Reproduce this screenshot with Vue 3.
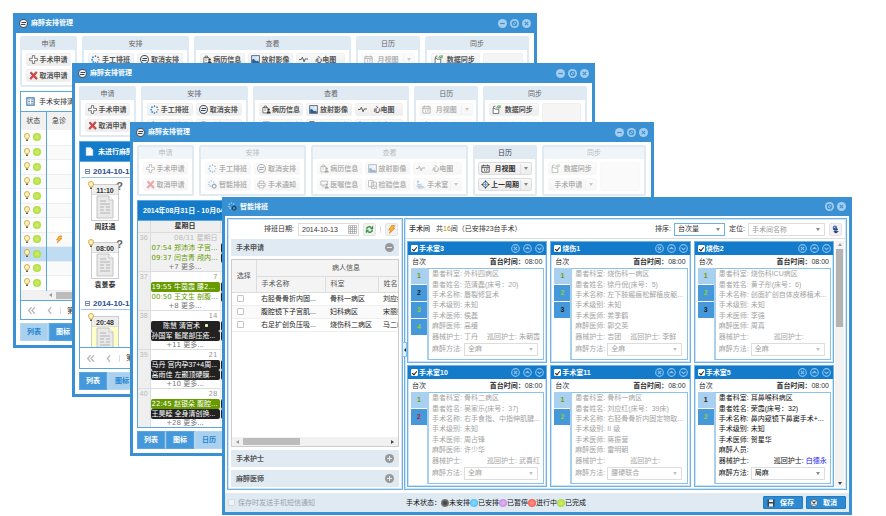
<script setup>
import { ref } from 'vue'

const groups = [
  { title: '申请', kind: 'apply', buttons: [
    { icon: 'plus', label: '手术申请' }, { icon: 'cross', label: '取消申请' }] },
  { title: '安排', kind: 'plan', buttons: [
    { icon: 'dots', label: '手工排班' }, { icon: 'link', label: '取消安排' },
    { icon: 'smart', label: '智能排班' }, { icon: 'print', label: '手术通知' }] },
  { title: '查看', kind: 'view', buttons: [
    { icon: 'case', label: '病历信息' }, { icon: 'image', label: '放射影像' }, { icon: 'ecg', label: '心电图' },
    { icon: 'order', label: '医嘱信息' }, { icon: 'report', label: '检验信息' }, { icon: 'room', label: '手术室', menu: true }] },
  { title: '日历', kind: 'calendar', buttons: [
    { icon: 'calendar', label: '月视图', menu: true }, { icon: 'target', label: '上一周期', menu: true }] },
  { title: '同步', kind: 'sync', buttons: [
    { icon: 'sync', label: '数据同步' }, { label: '手术申请', menu: true, faded: true }] }
]

const managers = [
  { kind: 'list', active: '列表' },
  { kind: 'icons', active: '图标' },
  { kind: 'month', active: '日历' }
]
const tabs = ['列表', '图标', '日历']

const cases = [0, 0, 0, 0, 0, 0, 0, 1, 0, 0, 0]

const days = [
  { date: '2014-10-15', items: [
    { time: '11:10', name: '周跃通', query: true }, { time: '08:00', name: '袁景泰', query: true }] },
  { date: '2014-10-13', items: [{ time: '20:48', name: '', marked: true }] }
]

const weeks = [
  { no: 36, date: '08/31 星期日', out: true, more: '+7 更多...', events: [
    { tone: 'plain', text: '07:54 郑沛沛 子宫...' }, { tone: 'plain', text: '09:37 闫吉青 颅内...' }] },
  { no: 37, date: '7', more: '+8 更多...', events: [
    { tone: 'green', text: '19:55 牛茵霞 腰2...' }, { tone: 'plain', text: '00:50 王文生 剖腹...' }] },
  { no: 38, date: '14', more: '+11 更多...', events: [
    { tone: 'black', text: '陈慧 清宫术', dot: true }, { tone: 'black', text: '孙国军 骶尾部压疮...' }] },
  { no: 39, date: '21', more: '+10 更多...', events: [
    { tone: 'black', text: '马丹 宫内孕37+4周...' }, { tone: 'black', text: '高雨佳 左颞顶硬膜...' }] },
  { no: 40, date: '28', more: '+28 更多...', events: [
    { tone: 'green', text: '22:45 赵银朵 腹腔...' }, { tone: 'black', text: '王昊睦 全身清创换...' }] }
]

const requests = [
  { op: '右胫骨骨折内固...', dept: '骨科一病区', name: '刘应红' },
  { op: '腹腔镜下子宫肌...', dept: '妇科病区', name: '宋丽娟' },
  { op: '右足扩创负压吸...', dept: '烧伤科二病区', name: '马二峰' }
]

const rooms = ref([
  { room: '手术室3', slots: ['done', 'todo', 'next', 'next'], dept: '外科四病区', patient: '范清磊(床号：20)', op: '唇裂修复术', level: '未知', surgeon: '侯磊', anes: '高缓', tool: '丁丹', round: '朱朝霞', method: '全麻' },
  { room: '烧伤1', slots: ['done', 'next', 'todo'], dept: '烧伤科一病区', patient: '徐丹倪(床号：5)', op: '左下肢瘢痕松解植皮躯...', level: '未知', surgeon: '娄季鹤', anes: '郭交英', tool: '吉团', round: '李鲜', method: '全麻' },
  { room: '烧伤2', slots: ['done', 'next', 'todo'], dept: '烧伤科ICU病区', patient: '黄子彤(床号：6)', op: '创面扩创自体皮移植术...', level: '未知', surgeon: '李强', anes: '周真', tool: '', round: '', method: '全麻' },
  { room: '手术室10', slots: ['done', 'alert'], dept: '骨科二病区', patient: '吴家乐(床号：37)', op: '右手食指、中指伸肌腱...', level: '未知', surgeon: '周占锋', anes: '许少华', tool: '', round: '武喜红', method: '全麻' },
  { room: '手术室11', slots: ['done', 'next'], dept: '骨科一病区', patient: '刘应红(床号：39床)', op: '右胫骨骨折内固定物取...', level: 'II 级', surgeon: '蒋振营', anes: '雷明朝', tool: '', round: '', method: '腰硬联合' },
  { room: '手术室5', slots: ['todo', 'next'], dept: '耳鼻喉科病区', patient: '荣霞(床号：32)', op: '鼻内窥镜下鼻窦手术+...', level: '未知', surgeon: '贺星华', anes: '', tool: '', round: '白德永', method: '局麻', open: true }
])

const fields = [
  ['患者科室:', 'dept'], ['患者姓名:', 'patient'], ['手术名称:', 'op'],
  ['手术级别:', 'level'], ['手术医师:', 'surgeon'], ['麻醉医师:', 'anes']
]

const states = [
  { label: '未安排', tone: 'gray' }, { label: '已安排', tone: 'blue' }, { label: '已暂停', tone: 'purple' },
  { label: '进行中', tone: 'red' }, { label: '已完成', tone: 'lime' }
]
</script>

<template>
  <main class="desktop">
    <svg class="sprite" aria-hidden="true">
      <symbol id="link" viewBox="0 0 16 16"><circle cx="8" cy="8" r="7" fill="#eef3f7" stroke="#4a5058" stroke-width="1.8" /><path d="M4.500 6.300h8M3.500 9.800h8" stroke="#3c444c" stroke-width="1.800" fill="none" /></symbol>
      <symbol id="cancel" viewBox="0 0 16 16"><circle cx="8" cy="8" r="7" fill="#eef3f7" stroke="#4a5058" stroke-width="1.5" /><path d="M5 5l6 6M11 5l-6 6" stroke="#3c444c" stroke-width="2.200" /></symbol>
      <symbol id="plus" viewBox="0 0 16 16"><path d="M6 1h4v5h5v4h-5v5H6v-5H1V6h5z" fill="#fff" stroke="#666" stroke-width="1.5" /></symbol>
      <symbol id="cross" viewBox="0 0 16 16"><path d="M2 3.5 4 1.5 8 5.7 12.500 1 14.500 3 10.300 7.800 15 13 12.500 15 8 10.300 3.500 15 1.500 13 5.800 8z" fill="#dd4448" stroke="#a83136" /></symbol>
      <symbol id="dots" viewBox="0 0 16 16"><g fill="#5d6670"><circle cx="8" cy="2" r="1.4" /><circle cx="12.500" cy="4" r="1.5" /><circle cx="14" cy="8.300" r="1.200" /><circle cx="12" cy="12.500" r="1.300" /></g><g fill="#3f96dd"><circle cx="3.500" cy="4" r="1.700" /><circle cx="2" cy="8.500" r="1.700" /><circle cx="4" cy="12.500" r="1.800" /><circle cx="8" cy="14.200" r="1.600" /></g></symbol>
      <symbol id="smart" viewBox="0 0 16 16"><g class="spark"><circle cx="6" cy="1.800" r="1.500" /><circle cx="2.300" cy="4" r="1.500" /><circle cx="1.800" cy="8" r="1.500" /><circle cx="4" cy="11" r="1.500" /><circle cx="10" cy="3.500" r="1.500" /></g><circle cx="11" cy="11" r="3.300" fill="none" stroke="#2a4560" stroke-width="2" /><path d="M11 6v2M11 14v2M6 11h2M14 11h2" stroke="#2a4560" stroke-width="1.500" /></symbol>
      <symbol id="print" viewBox="0 0 16 16"><path d="M4 6V2h8v4M4 11H1.500V6h13v5H12M4 9.500h8V14H4z" fill="#fff" stroke="#555" stroke-width="1.500" /></symbol>
      <symbol id="case" viewBox="0 0 16 16"><path d="M1.500 4.500h9V14h-9zM4 4.500V2h4v2.500" fill="#fff" stroke="#555" stroke-width="1.400" /><path d="M4 7h4M4 9.500h3" stroke="#555" /><circle cx="12" cy="8" r="2" fill="#333" /><path d="M8.500 15c0-5 7-5 7 0z" fill="#333" /></symbol>
      <symbol id="image" viewBox="0 0 16 16"><path d="M1 1h14v14H1z" fill="#cfe5f6" stroke="#56606a" stroke-width="1.500" /><path d="M2 14V8l3-1 4 4 3-1 2 2v2z" fill="#2d5f8f" /><circle cx="11.500" cy="4.500" r="1.500" fill="#fff" /></symbol>
      <symbol id="ecg" viewBox="0 0 16 16"><path d="M0 8h4l2-4 3 8 2-5h5" fill="none" stroke="#444" stroke-width="1.500" /></symbol>
      <symbol id="order" viewBox="0 0 16 16"><path d="M10 9H1.500V2h12v4M4 12h4" fill="none" stroke="#555" stroke-width="1.500" /><circle cx="12" cy="8" r="2" fill="#333" /><path d="M8.500 15c0-5 7-5 7 0z" fill="#333" /></symbol>
      <symbol id="report" viewBox="0 0 16 16"><path d="M1 1h8v11H1zM6 4h9v11H6z" fill="#fff" stroke="#555" stroke-width="1.400" /><path d="M8 7h4M8 10h3" stroke="#555" /><circle cx="11.500" cy="11" r="2" fill="none" stroke="#333" /></symbol>
      <symbol id="room" viewBox="0 0 16 16"><circle cx="3.500" cy="3" r="2" fill="#3f96dd" /><path d="M2 7l5 2 3-2M1 11h10l4 3M3 14h9" fill="none" stroke="#356a9c" stroke-width="1.700" /></symbol>
      <symbol id="calendar" viewBox="0 0 16 16"><path d="M1.500 3h13v11.500h-13zM1.500 6h13" fill="#fff" stroke="#444" stroke-width="1.500" /><path d="M4.500 1v3M11.500 1v3M5 8.500h1.500V13M9 8.500h2.500L9.500 13" fill="none" stroke="#444" stroke-width="1.300" /></symbol>
      <symbol id="target" viewBox="0 0 16 16"><circle cx="8" cy="8" r="4.600" fill="#d3e8f8" stroke="#555" stroke-width="1.400" /><path d="M8 0l2 3.500H6zM8 16l2-3.500H6zM0 8l3.500-2v4zM16 8l-3.500-2v4z" fill="#444" /><path d="M8 5v6M5 8h6" stroke="#4b98dc" stroke-width="1.400" /></symbol>
      <symbol id="sync" viewBox="0 0 16 16"><path d="M2 6h3l1 1.500h6V15H2zM2 6l1.500-4H6" fill="#fff" stroke="#555" stroke-width="1.400" /><path d="M8.500 5c0-3 3-4 5-3l1-1v4h-4l1-1.500" fill="none" stroke="#3a8a3e" stroke-width="1.500" /></symbol>
      <symbol id="minus" viewBox="0 0 16 16"><circle cx="8" cy="8" r="8" class="disc" /><path d="M4 8h8" class="mark" /></symbol>
      <symbol id="resize" viewBox="0 0 16 16"><circle cx="8" cy="8" r="8" class="disc" /><circle cx="8" cy="8" r="4" class="mark" /><path d="M5 5l6 6" class="mark" /></symbol>
      <symbol id="close" viewBox="0 0 16 16"><circle cx="8" cy="8" r="8" class="disc" /><path d="M5 5l6 6M11 5l-6 6" class="mark" /></symbol>
      <symbol id="ring-x" viewBox="0 0 16 16"><circle cx="8" cy="8" r="6.800" class="ring" /><path d="M5 5l6 6M11 5l-6 6" class="stroke" /></symbol>
      <symbol id="ring-up" viewBox="0 0 16 16"><circle cx="8" cy="8" r="6.800" class="ring" /><path d="M4.500 9.500 8 6l3.500 3.500" class="stroke" /></symbol>
      <symbol id="ring-down" viewBox="0 0 16 16"><circle cx="8" cy="8" r="6.800" class="ring" /><path d="M4.500 6.500 8 10l3.500-3.500" class="stroke" /></symbol>
      <symbol id="bulb" viewBox="0 0 16 16"><path d="M5.500 11C5.500 9 3 8 3 5a5 5 0 0 1 10 0c0 3-2.500 4-2.500 6z" fill="#fff3b8" stroke="#c99a2e" stroke-width="1.600" /><path d="M6 12h4v3H6z" fill="#6b6048" /></symbol>
      <symbol id="bolt" viewBox="0 0 16 16"><path d="M8 1h6l-3 5h3L4 15l3-6H3z" fill="#fbb62a" stroke="#d06f1a" /></symbol>
      <symbol id="sheet" viewBox="0 0 16 16"><path d="M2 1h8l4 4v10H2z" fill="#fff" stroke="#cfdbe6" /><path d="M10 1v4h4" fill="#cbd6df" /></symbol>
      <symbol id="grid" viewBox="0 0 16 16"><path d="M1.500 1.500h13v13h-13z" fill="#fff" stroke="#4478aa" stroke-width="2" /><path d="M4 5h3M9 5h4M4 8h3M9 8h4M4 11h3M9 11h4" stroke="#4478aa" stroke-width="1.400" /></symbol>
      <symbol id="doc" viewBox="0 0 18 24"><path d="M1 1h12l4 4v18H1z" fill="#e9e9e9" stroke="#c4c4c4" /><path d="M13 1v4h4" fill="#fff" stroke="#c4c4c4" /><path d="M4 6h6M4 9h10M4 12h4M10 12h4M4 15h4M10 15h4M4 18h10" stroke="#b4b4b4" stroke-width="1.200" /></symbol>
      <symbol id="cells" viewBox="0 0 16 16"><path d="M1 1h14v14H1zM1 4.500h14M1 8h14M1 11.500h14M4.500 1v14M8 1v14M11.500 1v14" fill="none" stroke="#8b8b8b" /></symbol>
      <symbol id="reload" viewBox="0 0 16 16"><path d="M3 7.500C3 3 8.500 2 11 4.500M13 8.500c0 4.500-5.500 5.500-8 3" fill="none" stroke="#37913f" stroke-width="2.600" /><path d="M14.500 1v6.500H8.500zM1.500 15V8.500h6z" fill="#37913f" /></symbol>
      <symbol id="locate" viewBox="0 0 16 16"><circle cx="7" cy="5" r="4" fill="#5474b8" /><path d="M7 5l6 2-3 3 4 1-5 4-5-3 3-2-4-3z" fill="#27437f" /><path d="M5 4l3 2M8 9l2 2" stroke="#d6e2f6" stroke-width="1.500" /></symbol>
      <symbol id="save" viewBox="0 0 16 16"><path d="M1 1h14v14H1z" fill="#37434e" /><path d="M4 1h8v5H4zM4 9h8v6H4z" fill="#e8f1f8" /></symbol>
      <symbol id="back" viewBox="0 0 16 16"><path d="M8 2 3 8l5 6M14 2 9 8l5 6" fill="none" stroke="#b9b9b9" stroke-width="2.400" /></symbol>
      <symbol id="prev" viewBox="0 0 16 16"><path d="M11 2 6 8l5 6" fill="none" stroke="#b9b9b9" stroke-width="2.400" /></symbol>
    </svg>

    <section v-for="m in managers" :key="m.kind" class="window" :class="'at-' + m.kind">
      <header class="titlebar">
        <svg class="ico"><use href="#link" /></svg>
        <h2>麻醉安排管理</h2>
        <button v-for="c in ['minus', 'resize', 'close']" :key="c" class="bare" :aria-label="c"><svg class="ico"><use :href="'#' + c" /></svg></button>
      </header>
      <div class="ribbon">
        <div v-for="g in groups" :key="g.kind" class="group" :class="[g.kind, { dim: m.kind === 'month' && g.kind !== 'calendar', off: m.kind !== 'month' && g.kind === 'calendar' }]">
          <h3>{{ g.title }}</h3>
          <div class="tools">
            <button v-for="b in g.buttons" :key="b.label" class="tool" :class="{ faded: b.faded }">
              <svg v-if="b.icon" class="ico"><use :href="'#' + b.icon" /></svg>
              <span>{{ b.label }}</span>
              <i v-if="b.menu" class="caret"></i>
            </button>
            <div v-if="g.kind === 'sync'" class="blank"></div>
          </div>
        </div>
      </div>

      <div class="pane">
        <template v-if="m.kind === 'list'">
          <div class="caption"><svg class="ico"><use href="#grid" /></svg>手术安排清单</div>
          <table class="cases">
            <thead><tr><th class="state">状态</th><th class="urgent">急诊</th><th></th></tr></thead>
            <tbody>
              <tr v-for="(u, i) in cases" :key="i" :class="{ picked: i === 8 }">
                <td class="state"><div class="lights"><svg class="lamp"><use href="#bulb" /></svg><i class="ball lime"></i></div></td>
                <td class="urgent"><svg v-if="u" class="lamp"><use href="#bolt" /></svg></td><td></td>
              </tr>
            </tbody>
          </table>
          <div class="hscroll inset"><i class="left"></i><b></b></div>
        </template>

        <template v-else-if="m.kind === 'icons'">
          <div class="caption solid"><svg class="ico"><use href="#sheet" /></svg>未进行麻醉</div>
          <div class="thumbs">
            <template v-for="d in days" :key="d.date">
              <h4><i class="fold"></i>{{ d.date }}</h4>
              <figure v-for="t in d.items" :key="t.time" :class="{ marked: t.marked }">
                <div class="thumb"><b>{{ t.time }}</b><svg class="doc"><use href="#doc" /></svg></div>
                <svg class="lamp tip"><use href="#bulb" /></svg>
                <span v-if="t.query" class="query">?</span>
                <figcaption>{{ t.name }}</figcaption>
              </figure>
            </template>
          </div>
        </template>

        <template v-else>
          <div class="caption solid range">2014年08月31日 - 10月04日</div>
          <table class="month">
            <thead><tr><th class="no"></th><th class="day">星期日</th><th></th></tr></thead>
            <tbody>
              <tr v-for="w in weeks" :key="w.no">
                <th class="no">{{ w.no }}</th>
                <td class="day" :class="{ out: w.out }">
                  <p class="when">{{ w.date }}</p>
                  <p v-for="e in w.events" :key="e.text" class="event" :class="[e.tone, { dotted: e.dot }]">{{ e.text }}</p>
                  <p class="more">{{ w.more }}</p>
                </td>
                <td :class="{ out: w.out }"><p class="when"></p><p class="event black"></p><p class="event black"></p></td>
              </tr>
            </tbody>
          </table>
        </template>

        <div v-if="m.kind !== 'month'" class="pager"><svg class="ico"><use href="#back" /></svg><svg class="ico prev"><use href="#prev" /></svg><i></i>第</div>
      </div>
      <nav class="views"><button v-for="t in tabs" :key="t" :class="{ on: t === m.active }">{{ t }}</button></nav>
    </section>

    <section class="window at-smart">
      <header class="titlebar">
        <svg class="ico"><use href="#smart" /></svg>
        <h2>智能排班</h2>
        <button v-for="c in ['resize', 'close']" :key="c" class="bare" :aria-label="c"><svg class="ico"><use :href="'#' + c" /></svg></button>
      </header>
      <div class="split">
        <aside class="frame side">
          <div class="filter">
            <label for="date">排班日期:</label>
            <div class="box date"><input id="date" value="2014-10-13"><svg class="ico"><use href="#cells" /></svg></div>
            <button class="mini" aria-label="刷新"><svg class="ico"><use href="#reload" /></svg></button>
            <i class="rule"></i>
            <button class="mini" aria-label="排班"><svg class="ico"><use href="#bolt" /></svg></button>
          </div>
          <button class="fold-head">手术申请<i class="knob"></i></button>
          <div class="sheet">
            <div class="grid">
              <table>
                <colgroup><col class="c1"><col class="c2"><col class="c3"><col class="c4"></colgroup>
                <thead>
                  <tr><th rowspan="2">选择</th><th colspan="3">病人信息</th></tr>
                  <tr><th class="sub">手术名称</th><th class="sub">科室</th><th class="sub">姓名</th></tr>
                </thead>
                <tbody>
                  <tr v-for="r in requests" :key="r.name"><td class="pick"><input type="checkbox" class="tick" :aria-label="r.name"></td><td>{{ r.op }}</td><td>{{ r.dept }}</td><td>{{ r.name }}</td></tr>
                </tbody>
              </table>
            </div>
            <div class="hscroll"><i class="left"></i><b></b><i class="right"></i></div>
          </div>
          <button class="fold-head">手术护士<i class="knob add"></i></button>
          <button class="fold-head">麻醉医师<i class="knob add"></i></button>
        </aside>
        <button class="grip" aria-label="收起"></button>

        <div class="frame">
          <div class="bar">
            <b>手术间</b><span class="count">共<em>16</em>间（已安排23台手术）</span>
            <label for="sort">排序:</label>
            <div class="box sort"><select id="sort"><option>台次量</option></select><i class="caret"></i></div>
            <label for="find">定位:</label>
            <div class="box find"><input id="find" placeholder="手术间名称"><i class="caret"></i></div>
            <button class="mini" aria-label="定位"><svg class="ico"><use href="#locate" /></svg></button>
          </div>
          <div class="scroller">
            <div class="cards">
              <article v-for="(r, n) in rooms" :key="r.room" class="card" :class="{ open: r.open }">
                <header>
                  <label><input type="checkbox" class="tick" checked>{{ r.room }}</label>
                  <button v-for="c in ['x', 'up', 'down']" :key="c" class="bare" :aria-label="c"><svg class="ico"><use :href="'#ring-' + c" /></svg></button>
                </header>
                <div class="first"><span>台次</span><span><b>首台时间：</b>08:00</span></div>
                <div class="detail">
                  <div class="slots"><button v-for="(s, i) in r.slots" :key="i" :class="s">{{ i + 1 }}</button></div>
                  <div class="info">
                    <p v-for="f in fields" :key="f[1]"><span>{{ r.open && f[1] === 'anes' ? '麻醉人员:' : f[0] }}</span><span>{{ r[f[1]] }}</span></p>
                    <p class="nurses"><span>器械护士:</span><span>{{ r.tool }}</span><span>巡回护士:</span><span class="round">{{ r.round }}</span></p>
                    <div class="method"><label :for="'m' + n">麻醉方法:</label><div class="box"><select :id="'m' + n"><option>{{ r.method }}</option></select><i class="caret"></i></div></div>
                  </div>
                </div>
              </article>
            </div>
            <div class="vscroll"><i class="up"></i><b></b><i class="down"></i></div>
          </div>
        </div>
      </div>
      <footer>
        <label class="notify"><input type="checkbox" class="tick" disabled>保存时发送手机短信通知</label>
        <div class="legend">手术状态：<template v-for="s in states" :key="s.label"><i class="ball" :class="s.tone"></i>{{ s.label }}</template></div>
        <button class="act"><svg class="ico"><use href="#save" /></svg><span>保存</span></button>
        <button class="act"><svg class="ico"><use href="#cancel" /></svg><span>取消</span></button>
      </footer>
    </section>
  </main>
</template>

<style>
html, body { background: #fff; }
.disc { fill: #a5cdee; }
.mark { fill: none; stroke: #3991d4; stroke-width: 2; }
.ring, .stroke { fill: none; stroke: #8cc3ee; stroke-width: 2; }
.spark { fill: var(--spark, #4b98dc); }
</style>

<style scoped>
* { box-sizing: border-box; margin: 0; }
.desktop { position: relative; min-height: 100vh; overflow: hidden; font: 7px/10px "Liberation Sans", "Noto Sans CJK SC", sans-serif; color: #333; }
button, input, select { font: inherit; color: inherit; border: 0; padding: 0; background: none; border-radius: 0; min-width: 0; }
h2, h3, h4 { font-size: inherit; }
table { border-collapse: collapse; table-layout: fixed; width: 100%; }
th, td { padding: 0; font-weight: 400; white-space: nowrap; overflow: hidden; }
.sprite { position: absolute; width: 0; height: 0; }
.ico { width: 9px; height: 9px; flex: none; display: block; }
.lamp { width: 8px; height: 9px; display: block; flex: none; }
.bare { display: block; }

.window { position: absolute; display: flex; flex-direction: column; background: #fff; border: 3px solid #3991d4; border-top: 0; overflow: hidden; }
.at-list { left: 13px; top: 13px; width: 524px; height: 335px; }
.at-icons { left: 72px; top: 63px; width: 523px; height: 334px; }
.at-month { left: 130px; top: 122px; width: 524px; height: 334px; }
.at-smart { left: 222px; top: 197px; width: 630px; height: 318px; }
.titlebar { display: flex; align-items: center; gap: 3px; height: 20px; flex: none; padding: 0 3px; background: #3991d4; color: #fff; --spark: #8fcbf7; }
.titlebar h2 { flex: 1; font-weight: 700; }
.at-smart .titlebar { height: 19px; }

.ribbon { display: grid; grid-template-columns: 57fr 107fr 157fr 64fr 104fr; gap: 5px; padding: 3px 5px 4px 4px; flex: none; }
.group { border: 2px solid #dfeaf3; border-radius: 2px; background: #fff; min-width: 0; }
.group h3 { height: 12px; line-height: 11px; background: #dfeaf3; text-align: center; font-weight: 400; color: #666; }
.tools { display: grid; gap: 3px; padding: 3px 4px; grid-auto-rows: 13px; }
.plan .tools { grid-template-columns: 1fr 1fr; }
.view .tools { grid-template-columns: 45fr 46fr 49fr; }
.calendar .tools { padding: 3px; }
.sync .tools { grid-template-columns: 50fr 40fr; grid-auto-flow: column; grid-template-rows: 13px 13px; }
.tool { display: flex; align-items: center; padding: 0 1px 0 2px; overflow: hidden; white-space: nowrap; background: linear-gradient(#f8f8f8, #ededed); border: 1px solid #f0f0f0; border-radius: 2px; font-weight: 700; color: #555; }
.tool span { flex: 1; text-align: center; }
.tool .caret { margin: 0 2px 0 3px; }
.tool span:has(+ .caret) { border-right: 1px solid #e2e2e2; }
.blank { grid-row: span 2; background: #f5f5f5; border: 1px solid #f0f0f0; border-radius: 2px; }
.dim h3, .dim .tools, .off .tools, .faded { opacity: .45; }
.dim .faded { opacity: 1; }
.at-month .calendar .tool { color: #333; border-color: #ddd; }
.at-month .calendar h3 { color: #444; }
.caret { width: 0; height: 0; flex: none; border: 2px solid transparent; border-top: 3px solid #888; border-bottom: 0; }

.pane { flex: 1; min-height: 0; display: flex; flex-direction: column; margin: 0 4px 3px; border: 1px solid #5aa7e0; overflow: hidden; }
.caption { display: flex; align-items: center; gap: 4px; height: 20px; flex: none; padding: 0 5px; border-bottom: 1px solid #5aa7e0; }
.solid { background: #137bca; color: #fff; font-weight: 700; }
.range { padding: 0 5px; }
.cases { flex: none; }
.cases th { height: 18px; background: #f1f1f1; border-right: 1px solid #ccc; color: #444; }
.cases .state { width: 25px; border-right: 1px solid #5aa7e0; }
.cases .urgent { width: 26px; }
.cases tbody tr { height: 15px; border-bottom: 1px solid #eee; }
.cases tbody tr:nth-child(even) { height: 14px; background: #fafafa; }
.cases tbody tr.picked { background: #bfdcf2; }
.cases .urgent svg { margin: 0 auto; }
.lights { display: flex; align-items: center; gap: 2px; padding-left: 2px; }
.ball { display: inline-block; width: 8px; height: 8px; border-radius: 50%; flex: none; }
.lime { background: radial-gradient(#c9ec62 20%, #9fd02a); }
.gray { background: radial-gradient(#444 20%, #aaa); }
.blue { background: radial-gradient(#7fd6f7 20%, #3fb6ea); }
.purple { background: radial-gradient(#deb0ee 20%, #bb7bdb); }
.red { background: radial-gradient(#ff8b80 20%, #f04440); }
.hscroll { display: flex; align-items: center; height: 9px; flex: none; padding: 0 4px; gap: 4px; background: #f1f1f1; }
.hscroll b { width: 57px; height: 7px; background: #bcbcbc; }
.inset { padding-left: 28px; }
.hscroll i { flex: none; border: 2px solid transparent; }
.hscroll .left { border-left: 0; border-right: 3px solid #999; }
.hscroll .right { border-right: 0; border-left: 3px solid #444; margin-left: auto; }
.pager { display: flex; align-items: center; gap: 6px; height: 21px; flex: none; margin-top: auto; padding: 0 6px; border-top: 1px solid #5aa7e0; background: #fff; }
.pager i { width: 1px; height: 7px; background: #ddd; }
.prev { margin-left: 3px; }
.views { display: flex; gap: 1px; height: 18px; flex: none; margin: 0 4px 4px; background: #a9d0ef; }
.views button { width: 28px; background: #4598d9; color: #fff; font-weight: 700; border: 1px solid #5ba6e0; }
.views .on, .at-list .views button:first-child { background: #a9d0ef; color: #2385d0; border-color: #b4d7f2; }
.at-list .views .on { background: #4598d9; color: #fff; border-color: #5ba6e0; }

.thumbs { flex: 1; min-height: 0; overflow: hidden; padding-left: 1px; }
.thumbs h4 { display: flex; align-items: center; gap: 3px; height: 16px; padding: 4px 4px 0; border-bottom: 1px solid #9fc3ea; color: #2d4f8e; font-size: 8px; }
.fold { width: 5px; height: 5px; border: 1px solid #7d93b5; background: linear-gradient(#fff 1px, #667fa8 1px, #667fa8 2px, #fff 2px); }
figure { position: relative; width: 48px; height: 58px; padding: 6px 10px 0; }
.thumb { display: flex; flex-direction: column; align-items: center; height: 37px; border: 1px solid #ccc; background: #fff; }
.thumb b { align-self: stretch; height: 10px; line-height: 11px; text-align: center; font-size: 7px; background: #eee; border-bottom: 1px solid #ddd; }
.marked .thumb { background: #ffffc8; }
.doc { width: 20px; height: 24px; }
figcaption { text-align: center; margin-top: 1px; font-weight: 700; font-size: 7px; }
.tip { position: absolute; left: 6px; top: 3px; }
.query { position: absolute; right: 6px; top: 3px; font-size: 11px; font-weight: 700; color: #666; }

.month { font-family: "DejaVu Sans", "Noto Sans CJK SC", sans-serif; }
.month th { background: #efefef; border-right: 1px solid #ddd; }
.month thead th { height: 11px; font-weight: 700; border-bottom: 1px solid #ddd; }
.month .no { width: 12px; vertical-align: top; color: #bbb; font-family: "Liberation Sans", sans-serif; }
.month .day { width: 70px; }
.month tbody tr { height: 39px; border-bottom: 1px solid #ddd; }
.month td { vertical-align: top; padding: 0; border-right: 1px solid #eee; }
.month .out { background: #f1f1f1; }
.month p { overflow: hidden; }
.when { height: 10px; text-align: right; padding-right: 2px; color: #999; }
.out .when { color: #bbb; }
.event { height: 10px; line-height: 10px; border-radius: 2px; padding-left: 1px; color: #fff; }
.event.plain { color: #669a00; }
.event.green { background: #669a00; }
.event.black { background: #222; font-family: "Liberation Sans", "Noto Sans CJK SC", sans-serif; }
.event.dotted { display: flex; align-items: center; justify-content: center; gap: 5px; }
.dotted::after { content: ""; width: 3px; height: 3px; border-radius: 1px; background: #f4f2b0; }
.more { height: 8px; line-height: 8px; text-align: center; color: #777; }

.split { flex: 1; min-height: 0; display: grid; grid-template-columns: 176px minmax(0, 1fr); gap: 1px; padding: 2px; position: relative; }
.frame { border: 1px solid #6db1e6; box-shadow: inset 0 0 0 1px #d0e6f7; display: flex; flex-direction: column; min-height: 0; min-width: 0; }
.side { padding: 2px 3px; gap: 3px; }
.filter { display: flex; align-items: center; gap: 4px; height: 14px; margin: 1px 1px 0; justify-content: flex-end; }
.box { position: relative; display: flex; align-items: center; height: 13px; border: 1px solid #ddd; background: #fff; }
.box input, .box select { flex: 1; width: 0; height: 11px; padding: 0 3px; appearance: none; outline: 0; }
.box .caret { margin-right: 4px; }
.date { width: 61px; padding-right: 1px; }
.mini { display: grid; place-items: center; width: 13px; height: 13px; background: #f2f2f2; border: 1px solid #e4e4e4; border-radius: 2px; }
.rule { width: 1px; height: 7px; background: #ddd; }
.fold-head { display: flex; align-items: center; justify-content: space-between; height: 17px; flex: none; padding: 0 5px; background: #dfeaf3; font-weight: 700; color: #555; }
.knob { width: 9px; height: 9px; border-radius: 50%; background: linear-gradient(#dfeaf3, #dfeaf3) center / 5px 1px no-repeat #999; }
.knob.add { background: linear-gradient(#dfeaf3, #dfeaf3) center / 5px 1px no-repeat, linear-gradient(#dfeaf3, #dfeaf3) center / 1px 5px no-repeat, #999; }
.sheet { flex: 1; min-height: 0; display: flex; flex-direction: column; border: 1px solid #ccc; }
.grid { flex: 1; min-height: 0; overflow: hidden; }
.grid table { width: 204px; }
.grid th { height: 16px; background: #f4f4f4; border: 1px solid #ddd; border-top: 0; border-left: 0; color: #555; }
.grid th.sub { text-align: left; padding-left: 5px; }
.grid td { height: 13px; padding-left: 5px; border-bottom: 1px solid #eee; color: #222; }
.grid tbody tr:nth-child(even) { background: #fafafa; }
.c1 { width: 24px; }
.c2 { width: 69px; }
.c3 { width: 53px; }
.c4 { width: 58px; }
.tick { appearance: none; display: grid; place-items: center; width: 7px; height: 7px; flex: none; border: 1px solid #c4c4c4; border-radius: 1px; background: #fff; }
.tick:checked::before { content: ""; width: 2px; height: 4px; border: solid #222; border-width: 0 1px 1px 0; rotate: 40deg; }
.grip { position: absolute; left: 177px; top: 126px; width: 5px; height: 15px; border: 1px solid #8cc1ec; background: #e3f0fa; display: grid; place-items: center; }
.grip::before { content: ""; border: 2px solid transparent; border-left: 0; border-right: 2px solid #223; }

.bar { display: flex; align-items: center; gap: 3px; height: 20px; flex: none; padding: 1px 4px 0; border-bottom: 1px solid #ddd; }
.bar b { font-weight: 500; }
.count { flex: 1; padding-left: 3px; }
.count em { font-style: normal; color: #b8860b; }
.sort { width: 51px; border-color: #6db1e6; margin-right: 1px; }
.find { width: 77px; margin-right: 1px; }
.find input::placeholder { color: #999; opacity: 1; }
.scroller { flex: 1; min-height: 0; display: flex; padding: 2px; gap: 1px; }
.cards { flex: 1; min-width: 0; display: grid; grid-template-columns: repeat(3, minmax(0, 1fr)); grid-auto-rows: minmax(0, 1fr); gap: 2px 3px; }
.card { display: flex; flex-direction: column; min-height: 0; border: 1px solid #6db1e6; box-shadow: inset 0 0 0 1px #cde4f6; padding-bottom: 2px; color: #a4a4a4; }
.card.open { color: #111; }
.card header { display: flex; align-items: center; gap: 3px; height: 13px; flex: none; padding: 0 2px 0 3px; background: #137bca; color: #fff; font-weight: 700; }
.card header label { flex: 1; display: flex; align-items: center; gap: 1px; }
.card .tick { border-color: #fff; }
.first { display: flex; justify-content: space-between; height: 13px; line-height: 13px; flex: none; padding: 0 4px; color: #333; }
.detail { flex: 1; min-height: 0; display: flex; padding: 0 2px 0 3px; }
.slots { width: 16px; display: flex; flex-direction: column; gap: 1px; }
.slots button { height: 16px; flex: none; background: #4598d9; font-weight: 700; }
.slots button:first-child { background: #a9d0ef; }
.done { color: #6b9a10; }
.todo { color: #222; }
.next { color: #8fce35; }
.alert { color: #d0102c; }
.info { flex: 1; min-width: 0; display: flex; flex-direction: column; border: 1px solid #8cc1ec; border-left: 2px solid #a9d0ef; padding: 0 1px 2px 3px; }
.info p { flex: 1; min-height: 0; display: grid; grid-template-columns: 32px minmax(0, 1fr); align-items: center; white-space: nowrap; }
.info .nurses { grid-template-columns: 32px 23px 32px minmax(0, 1fr); }
.open .round { color: #22e; }
.method { display: flex; align-items: center; flex: none; height: 15px; }
.method label { width: 32px; }
.method .box { flex: 1; margin-right: 4px; }
.card:not(.open) .caret { opacity: .5; }
.vscroll { display: flex; flex-direction: column; align-items: center; width: 9px; padding: 2px 0; gap: 3px; background: #f3f3f3; }
.vscroll b { width: 7px; height: 78px; background: #b4b4b4; }
.vscroll i { border: 2px solid transparent; }
.vscroll .up { border-top: 0; border-bottom: 3px solid #999; }
.vscroll .down { border-bottom: 0; border-top: 3px solid #444; margin-top: auto; }

footer { display: grid; grid-template-columns: 175px 1fr auto auto; align-items: center; gap: 3px; height: 19px; flex: none; margin-top: 1px; padding: 0 3px; background: #dfeaf3; color: #111; }
.notify { display: flex; align-items: center; gap: 3px; color: #9ba4ab; }
.notify .tick { border-color: #d5dbe0; background: #eef3f7; }
.legend { display: flex; align-items: center; }
.act { display: flex; align-items: center; width: 40px; height: 13px; padding: 0 3px; background: #2c8ad2; border: 1px solid #1f7cc4; border-radius: 1px; color: #fff; font-weight: 700; }
.act span { flex: 1; }
.act .ico { width: 8px; height: 8px; }
</style>
